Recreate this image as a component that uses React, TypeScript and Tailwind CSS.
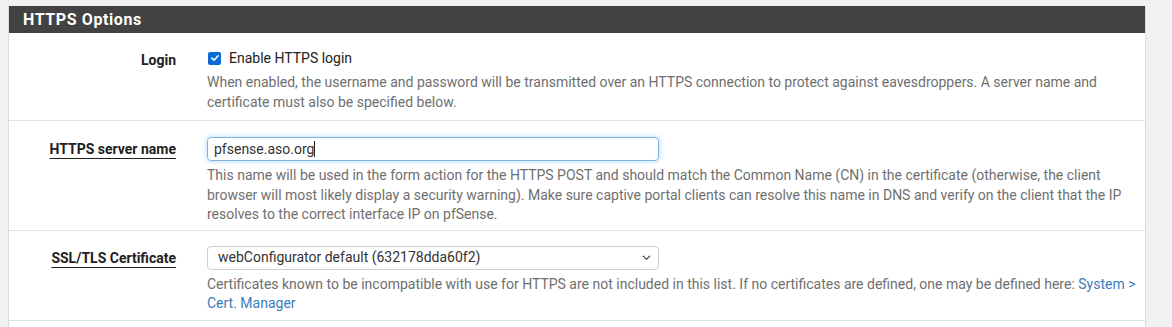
import React from 'react';

const font = { fontFamily: 'Roboto, "Liberation Sans", sans-serif' };

function Row({ label, underline, pt, pb, children }: { label: string; underline?: boolean; pt: string; pb: string; children: React.ReactNode }) {
    return (
        <div className="flex border-b border-[#e2e2e2]">
            <div className={`w-[167px] shrink-0 text-right ${pt}`}>
                <span
                    className={`text-[14px] font-bold leading-[20px] text-[#212121] ${
                        underline ? 'underline decoration-[#212121] underline-offset-[4px]' : ''
                    }`}
                >
                    {label}
                </span>
            </div>
            <div className={`ml-[31px] w-[935px] ${pt} ${pb}`}>{children}</div>
        </div>
    );
}

function Help({ children }: { children: React.ReactNode }) {
    return <p className="mt-[5px] whitespace-nowrap text-[14px] leading-[19.5px] text-[#6f6f6f]">{children}</p>;
}

export default function App() {
    return (
        <div className="min-h-screen bg-[#f1f1f1] pt-[6px] pl-[8px]" style={font}>
            <div className="w-[1138px] bg-white border-r border-l border-[#dcdcdc]">
                {/* Header */}
                <div className="h-[27px] bg-[#424242] pl-[14px] flex items-center">
                    <h2 className="text-[16px] font-bold tracking-[0.6px] text-white">HTTPS Options</h2>
                </div>

                <Row label="Login" pt="pt-[15px]" pb="pb-[8px]">
                    <label className="flex items-center h-[20px] text-[14px] text-[#212121]">
                        <span className="ml-[1px] mr-[8px] flex h-[13px] w-[13px] items-center justify-center rounded-[2px] bg-[#0b6ad6]">
                            <svg viewBox="0 0 12 12" className="h-[10px] w-[10px]">
                                <path d="M2.2 6.2 L4.8 8.7 L9.8 3.3" fill="none" stroke="white" strokeWidth="1.9" strokeLinecap="round" strokeLinejoin="round" />
                            </svg>
                        </span>
                        Enable HTTPS login
                    </label>
                    <Help>
                        When enabled, the username and password will be transmitted over an HTTPS connection to protect against eavesdroppers. A server name and
                        <br />
                        certificate must also be specified below.
                    </Help>
                </Row>

                <Row label="HTTPS server name" underline pt="pt-[16px]" pb="pb-[5px]">
                    <div className="h-[24px] w-[452px] rounded-[4px] border border-[#7fb5e6] px-[6px] text-[14px] leading-[22px] text-[#333] shadow-[0_0_5px_rgba(102,175,233,0.55)]">
                        pfsense.aso.org<span className="inline-block h-[16px] w-px bg-[#222] align-[-3px]" />
                    </div>
                    <Help>
                        This name will be used in the form action for the HTTPS POST and should match the Common Name (CN) in the certificate (otherwise, the client
                        <br />
                        browser will most likely display a security warning). Make sure captive portal clients can resolve this name in DNS and verify on the client that the IP
                        <br />
                        resolves to the correct interface IP on pfSense.
                    </Help>
                </Row>

                <Row label="SSL/TLS Certificate" underline pt="pt-[15px]" pb="pb-[6px]">
                    <div className="flex h-[24px] w-[452px] items-center justify-between rounded-[4px] border border-[#cfcfcf] pl-[10px] pr-[6px] text-[14px] text-[#333]">
                        <span>webConfigurator default (632178dda60f2)</span>
                        <svg viewBox="0 0 12 12" className="h-[11px] w-[11px]">
                            <path d="M2.5 4.5 L6 8 L9.5 4.5" fill="none" stroke="#444" strokeWidth="1.4" strokeLinecap="round" strokeLinejoin="round" />
                        </svg>
                    </div>
                    <Help>
                        Certificates known to be incompatible with use for HTTPS are not included in this list. If no certificates are defined, one may be defined here:{' '}
                        <a className="text-[#3b7cb8]">System &gt;</a>
                        <br />
                        <a className="text-[#3b7cb8]">Cert. Manager</a>
                    </Help>
                </Row>

                {/* next row continues below the fold */}
                <div className="h-[20px]" />
            </div>
        </div>
    );
}
